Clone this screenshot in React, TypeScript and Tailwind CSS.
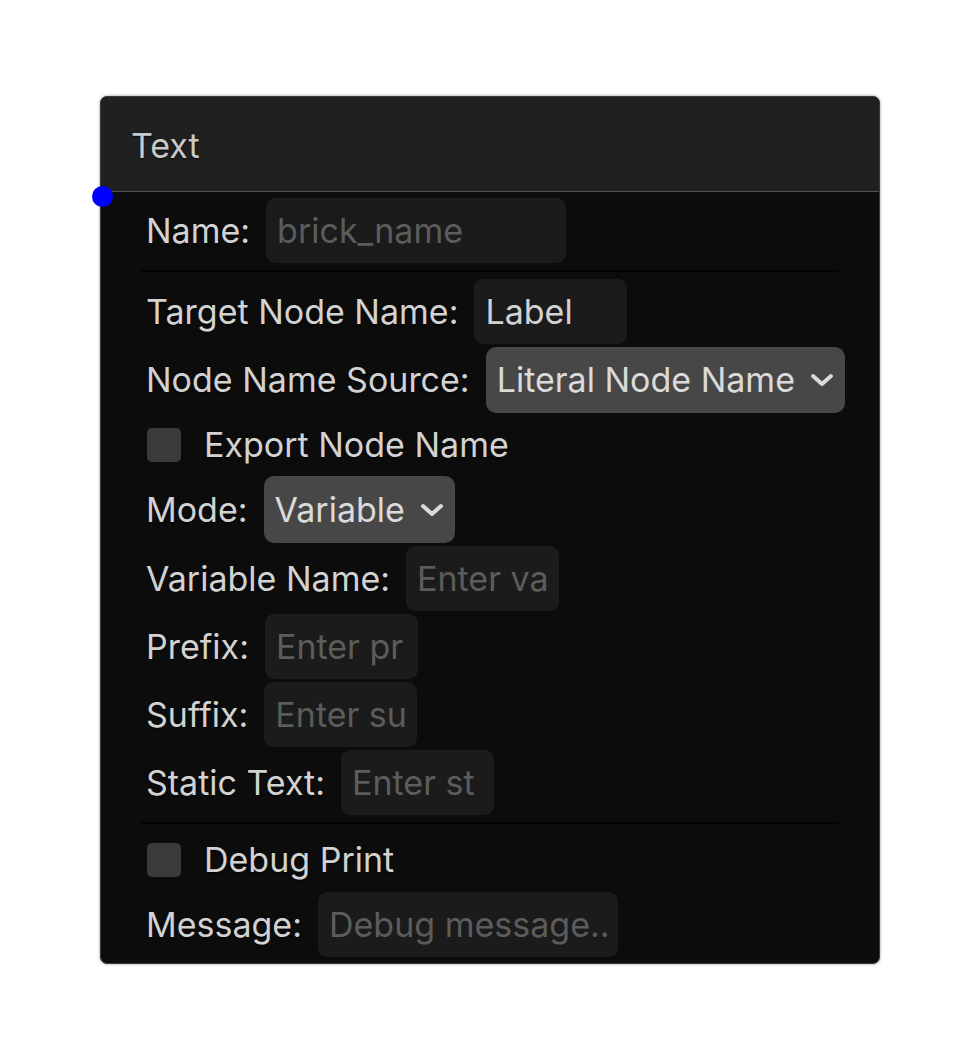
import { ReactNode } from 'react';

const font = { fontFamily: 'Inter, "Noto Sans", sans-serif' };

function Row({ label, children }: { label: string; children: ReactNode }) {
  return (
    <div className="flex items-center gap-[16px] pl-[5px]">
      <span className="text-[#d2d2d2] whitespace-nowrap [text-shadow:0_1px_2px_rgba(0,0,0,0.7)]">{label}</span>
      {children}
    </div>
  );
}

function TextInput({ placeholder, value, wide }: { placeholder?: string; value?: string; wide?: boolean }) {
  return (
    <input
      readOnly
      defaultValue={value}
      placeholder={placeholder}
      style={font}
      className={`h-[65px] ${wide ? 'w-[300px]' : 'w-[153px]'} rounded-[9px] bg-[#1b1b1b] px-[11px] text-[34px] text-[#d2d2d2] placeholder:text-[#5c5c5c] outline-none`}
    />
  );
}

function Select({ value, h = 'h-[66px]' }: { value: string; h?: string }) {
  return (
    <div className={`flex ${h} items-center gap-[15px] rounded-[10px] bg-[#474747] pl-[11px] pr-[11px] text-[#dadada] whitespace-nowrap`}>
      <span>{value}</span>
      <svg width="24" height="14" viewBox="0 0 24 14" fill="none">
        <path d="M3 3 L12 11 L21 3" stroke="#dadada" strokeWidth="4" strokeLinecap="round" strokeLinejoin="round" />
      </svg>
    </div>
  );
}

function Check({ label, h }: { label: string; h: string }) {
  return (
    <div className={`flex ${h} items-center gap-[23px] pl-[6px]`}>
      <div className="h-[34px] w-[34px] rounded-[5px] bg-[#3b3b3b]" />
      <span className="text-[#d2d2d2] [text-shadow:0_1px_2px_rgba(0,0,0,0.7)]">{label}</span>
    </div>
  );
}

function Separator() {
  return (
    <div className="flex h-[10px] items-center">
      <div className="h-[2px] w-full bg-[#030303]" />
    </div>
  );
}

export default function App() {
  return (
    <div className="min-h-screen bg-white pl-[100px] pt-[96px]" style={font}>
      <div className="relative w-[780px] rounded-[7px] border border-[#3c3c3c] bg-[#0c0c0c] text-[34px] leading-none shadow-[0_0_3px_rgba(0,0,0,0.45)]">
        <div className="flex h-[95px] items-center rounded-t-[7px] border-b border-[#525252] bg-[#202020] pl-[30px] pt-[3px] text-[#c9c9c9] [text-shadow:0_1px_2px_rgba(0,0,0,0.8)]">
          Text
        </div>
        <div className="absolute left-[-9px] top-[89px] h-[21px] w-[21px] rounded-full bg-[#0000ff]" />
        <div className="flex flex-col gap-[3px] px-[40px] pb-[6px] pt-[6px]">
          <Row label="Name:">
            <TextInput placeholder="brick_name" wide />
          </Row>
          <Separator />
          <Row label="Target Node Name:">
            <TextInput value="Label" />
          </Row>
          <Row label="Node Name Source:">
            <Select value="Literal Node Name" />
          </Row>
          <Check label="Export Node Name" h="h-[57px]" />
          <Row label="Mode:">
            <Select value="Variable" h="h-[67px]" />
          </Row>
          <Row label="Variable Name:">
            <TextInput placeholder="Enter va" />
          </Row>
          <Row label="Prefix:">
            <TextInput placeholder="Enter pr" />
          </Row>
          <Row label="Suffix:">
            <TextInput placeholder="Enter su" />
          </Row>
          <Row label="Static Text:">
            <TextInput placeholder="Enter st" />
          </Row>
          <Separator />
          <Check label="Debug Print" h="h-[58px]" />
          <Row label="Message:">
            <TextInput placeholder="Debug message.." wide />
          </Row>
        </div>
      </div>
    </div>
  );
}
